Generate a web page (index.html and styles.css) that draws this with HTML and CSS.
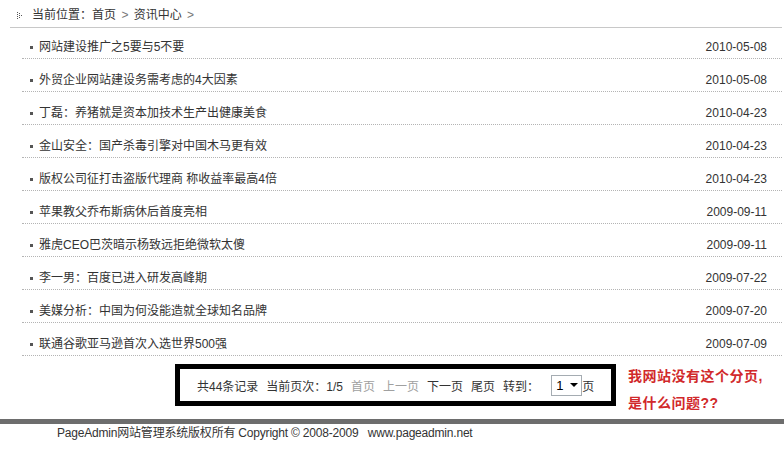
FILE: index.html
```html
<!DOCTYPE html>
<html lang="zh-CN">
<head>
    <meta charset="UTF-8">
    <title>资讯中心</title>
    <link rel="stylesheet" href="styles.css">
</head>
<body>
    <div class="crumb">
        <svg class="crumb-icon" width="5" height="8" viewBox="0 0 5 8">
            <rect x="0" y="0" width="1" height="1"/><rect x="0" y="2" width="1" height="1"/>
            <rect x="0" y="4" width="1" height="1"/><rect x="0" y="6" width="1" height="1"/>
            <rect x="2" y="1" width="1" height="1"/><rect x="2" y="3" width="1" height="1"/>
            <rect x="2" y="5" width="1" height="1"/><rect x="4" y="3" width="1" height="1"/>
        </svg><span class="crumb-text">当前位置：<a href="#">首页</a> <span class="sep">&gt;</span> <a href="#">资讯中心</a> <span class="sep">&gt;</span></span>
    </div>

    <ul class="news">
        <li><a href="#">网站建设推广之5要与5不要</a><span class="date">2010-05-08</span></li>
        <li><a href="#">外贸企业网站建设务需考虑的4大因素</a><span class="date">2010-05-08</span></li>
        <li><a href="#">丁磊：养猪就是资本加技术生产出健康美食</a><span class="date">2010-04-23</span></li>
        <li><a href="#">金山安全：国产杀毒引擎对中国木马更有效</a><span class="date">2010-04-23</span></li>
        <li><a href="#">版权公司征打击盗版代理商 称收益率最高4倍</a><span class="date">2010-04-23</span></li>
        <li><a href="#">苹果教父乔布斯病休后首度亮相</a><span class="date">2009-09-11</span></li>
        <li><a href="#">雅虎CEO巴茨暗示杨致远拒绝微软太傻</a><span class="date">2009-09-11</span></li>
        <li><a href="#">李一男：百度已进入研发高峰期</a><span class="date">2009-07-22</span></li>
        <li><a href="#">美媒分析：中国为何没能造就全球知名品牌</a><span class="date">2009-07-20</span></li>
        <li><a href="#">联通谷歌亚马逊首次入选世界500强</a><span class="date">2009-07-09</span></li>
    </ul>

    <div class="pager-row">
        <div class="pager">
            <span class="pg-item">共44条记录</span>
            <span class="pg-item">当前页次：1/5</span>
            <span class="pg-item off">首页</span>
            <span class="pg-item off">上一页</span>
            <a class="pg-item" href="#">下一页</a>
            <a class="pg-item" href="#">尾页</a>
            <span class="pg-jump">转到：</span>
            <span class="pg-select">1<i class="arrow"></i></span>页
        </div>
        <div class="note">我网站没有这个分页,<br>是什么问题??</div>
    </div>

    <div class="footer">PageAdmin网站管理系统版权所有 Copyright © 2008-2009 &nbsp;&nbsp;www.pageadmin.net</div>
</body>
</html>
```

FILE: styles.css
```css
body {
    margin: 0;
    font-family: "Liberation Sans", "Noto Sans CJK SC", sans-serif;
    font-size: 12px;
    color: #333;
    background: #fff;
}

a {
    color: #333;
    text-decoration: none;
}

.crumb {
    height: 22px;
    padding: 5px 0 0 7px;
    margin: 0 2px 0 10px;
    line-height: 20px;
    border-bottom: 1px solid #c8c8c8;
}

.crumb-icon {
    fill: #555;
    margin-right: 10px;
    vertical-align: -1px;
}

.sep {
    color: #777;
    margin: 0 2px;
}

.news {
    list-style: none;
    margin: -2px 2px 0 22px;
    padding: 0;
}

.news li {
    display: flex;
    align-items: center;
    height: 20px;
    padding: 11px 15px 1px 0;
    line-height: 20px;
    border-bottom: 1px dotted #b4b4b4;
}

.news li::before {
    content: "";
    width: 3px;
    height: 3px;
    background: #555;
    margin: 1px 6px 0 8px;
}

.date {
    margin-left: auto;
}

.pager-row {
    display: flex;
    align-items: flex-start;
    margin-top: 8px;
    padding-left: 175px;
}

.pager {
    width: 414px;
    height: 32px;
    padding-left: 17px;
    border: 5px solid #000;
    display: flex;
    align-items: center;
    white-space: nowrap;
}

.pg-item {
    margin-right: 8px;
}

.pg-item.off {
    color: #a0a0a0;
}

.pg-jump {
    margin-right: 12px;
}

.pg-select {
    height: 19px;
    width: 25px;
    padding-left: 4px;
    border: 1px solid #a5acb2;
    display: inline-flex;
    align-items: center;
    font-size: 13px;
    color: #000;
}

.arrow {
    margin-left: 7px;
    width: 0;
    height: 0;
    border-left: 4px solid transparent;
    border-right: 4px solid transparent;
    border-top: 4px solid #000;
}

.note {
    margin: -1px 0 0 12px;
    font-size: 14px;
    font-weight: bold;
    letter-spacing: 0.5px;
    line-height: 27px;
    color: #d1292b;
}

.footer {
    margin-top: 2px;
    border-top: 5px solid #6d6d6d;
    padding-left: 57px;
    line-height: 18px;
    letter-spacing: -0.2px;
}
```
